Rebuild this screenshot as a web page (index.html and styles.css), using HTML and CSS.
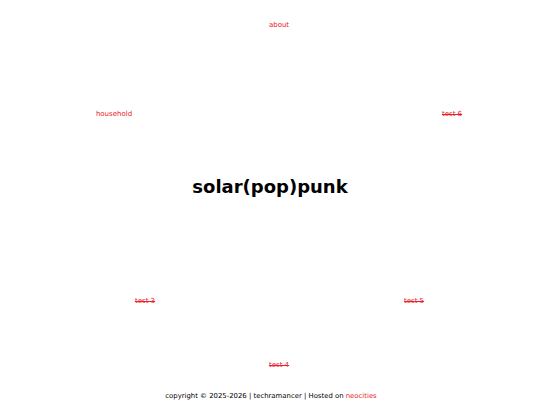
FILE: index.html
```html
<!DOCTYPE html>
<html>
<head>
<meta charset="utf-8">
<link rel="stylesheet" href="styles.css">
</head>
<body>
<main class="stage">
  <h1 class="title">solar(pop)punk</h1>
  <nav class="ring">
    <a class="node n-about" href="#">about</a>
    <a class="node n-household" href="#">household</a>
    <a class="node n-test6 off" href="#">test 6</a>
    <a class="node n-test3 off" href="#">test 3</a>
    <a class="node n-test5 off" href="#">test 5</a>
    <a class="node n-test4 off" href="#">test 4</a>
  </nav>
</main>
<footer class="foot">copyright © 2025-2026 | techramancer | Hosted on <a href="#">neocities</a></footer>
</body>
</html>
```
FILE: styles.css
```css
html, body {
  margin: 0;
  padding: 0;
  background: #fff;
}
body {
  font-family: "DejaVu Sans", Verdana, sans-serif;
  width: 540px;
  height: 405px;
  display: flex;
  flex-direction: column;
}
.stage {
  position: relative;
  flex: 1;
  display: flex;
  align-items: center;
  justify-content: center;
}
.title {
  margin: 0;
  font-size: 18px;
  font-weight: bold;
  color: #000;
  transform: translateY(-9px);
}
.node {
  position: absolute;
  transform: translate(-50%, -50%);
  font-size: 7px;
  color: #e82228;
  text-decoration: none;
  white-space: nowrap;
}
.node.off { text-decoration: line-through; }
.n-about { left: 279px; top: 25px; }
.n-household { left: 114px; top: 114px; }
.n-test6 { left: 452px; top: 114px; }
.n-test3 { left: 145px; top: 301px; }
.n-test5 { left: 414px; top: 301px; }
.n-test4 { left: 279px; top: 365px; }
.foot {
  font-size: 6.9px;
  color: #000;
  text-align: center;
  padding: 0 0 4px 2px;
  line-height: 10px;
}
.foot a { color: #e82228; text-decoration: none; }
```
